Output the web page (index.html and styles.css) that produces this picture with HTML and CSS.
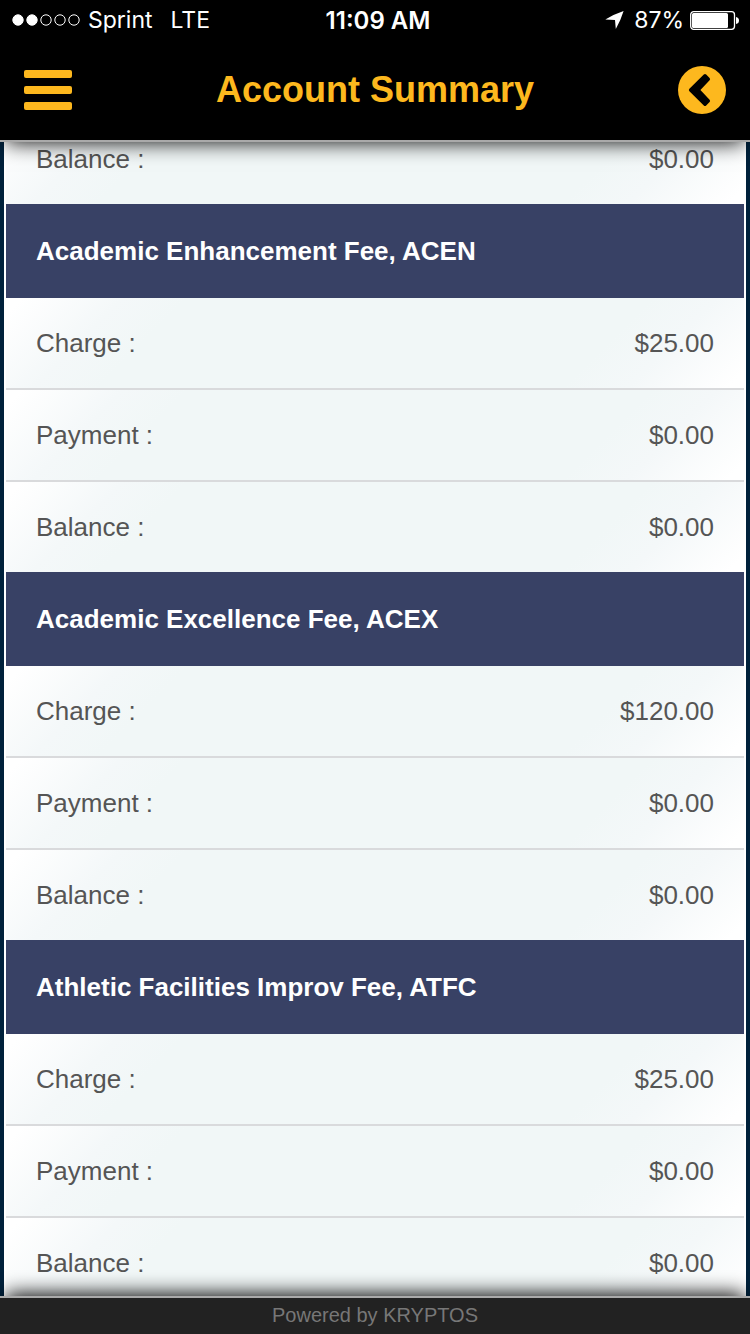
FILE: index.html
```html
<!DOCTYPE html>
<html lang="en">
<head>
    <meta charset="UTF-8">
    <meta name="viewport" content="width=device-width, initial-scale=1.0">
    <title>Account Summary</title>
    <link rel="stylesheet" href="styles.css">
</head>
<body>
    <header class="top">
        <div class="status-bar">
            <div class="carrier">
                <svg width="68" height="12" viewBox="0 0 68 12" fill="none" stroke="#fff" aria-hidden="true">
                    <circle cx="6" cy="6" r="5.2" fill="#fff"/>
                    <circle cx="20" cy="6" r="5.2" fill="#fff"/>
                    <circle cx="34" cy="6" r="5.2"/>
                    <circle cx="48" cy="6" r="5.2"/>
                    <circle cx="62" cy="6" r="5.2"/>
                </svg>
                <span class="operator">Sprint</span>
                <span class="network">LTE</span>
            </div>
            <div class="time">11:09 AM</div>
            <div class="power">
                <svg width="19" height="18" viewBox="0 0 19 18" fill="#fff" aria-hidden="true">
                    <path d="M18.6 0Q8 3.6 0.3 8.4L10 8.9 10.8 17.9Q15.5 10 18.6 0Z"/>
                </svg>
                <span class="percent">87%</span>
                <svg width="49" height="19" viewBox="0 0 49 19" aria-hidden="true">
                    <rect x="0.7" y="0.7" width="43.8" height="17.6" rx="3" fill="none" stroke="#fff" stroke-width="1.3"/>
                    <rect x="2" y="2" width="36" height="15" rx="1.5" fill="#fff"/>
                    <path d="M46 6v7q3-0.5 3-3.5T46 6z" fill="#fff"/>
                </svg>
            </div>
        </div>
        <div class="nav">
            <button class="icon-btn" type="button" aria-label="Menu">
                <svg width="48" height="40" viewBox="0 0 48 40" fill="#fdb81e">
                    <rect width="48" height="8" rx="2"/>
                    <rect y="16" width="48" height="8" rx="2"/>
                    <rect y="32" width="48" height="8" rx="2"/>
                </svg>
            </button>
            <h1>Account Summary</h1>
            <button class="icon-btn" type="button" aria-label="Back">
                <svg width="48" height="48" viewBox="0 0 48 48">
                    <circle cx="24" cy="24" r="24" fill="#fdb81e"/>
                    <path d="M25.8 8.5q1.2-1 2.4 0l3.4 3.4q1 1.2 0 2.4L22.4 24l9.2 9.7q1 1.2 0 2.4l-3.4 3.4q-1.2 1-2.4 0L11.4 25.2q-1.2-1.2 0-2.4z" fill="#000"/>
                </svg>
            </button>
        </div>
    </header>

    <main class="content">
        <div class="fees">
            <dl class="rows">
                <div class="row"><dt>Balance :</dt><dd>$0.00</dd></div>
            </dl>

            <h2>Academic Enhancement Fee, ACEN</h2>
            <dl class="rows">
                <div class="row"><dt>Charge :</dt><dd>$25.00</dd></div>
                <div class="row"><dt>Payment :</dt><dd>$0.00</dd></div>
                <div class="row"><dt>Balance :</dt><dd>$0.00</dd></div>
            </dl>

            <h2>Academic Excellence Fee, ACEX</h2>
            <dl class="rows">
                <div class="row"><dt>Charge :</dt><dd>$120.00</dd></div>
                <div class="row"><dt>Payment :</dt><dd>$0.00</dd></div>
                <div class="row"><dt>Balance :</dt><dd>$0.00</dd></div>
            </dl>

            <h2>Athletic Facilities Improv Fee, ATFC</h2>
            <dl class="rows">
                <div class="row"><dt>Charge :</dt><dd>$25.00</dd></div>
                <div class="row"><dt>Payment :</dt><dd>$0.00</dd></div>
                <div class="row"><dt>Balance :</dt><dd>$0.00</dd></div>
            </dl>
        </div>
    </main>

    <footer class="footer">Powered by KRYPTOS</footer>
</body>
</html>
```
FILE: styles.css
```css
* {
    box-sizing: border-box;
}
body {
    margin: 0;
    height: 100vh;
    display: flex;
    flex-direction: column;
    overflow: hidden;
    background-color: #00213b;
    font-family: "Liberation Sans", Arial, sans-serif;
    font-size: 26px;
    color: #555;
}
h1, h2, dl, dd {
    margin: 0;
}

/* top bar */
.top {
    position: relative;
    z-index: 1;
    flex: none;
    background-color: #000;
    border-bottom: 2px solid #aaa;
    box-shadow: 0 6px 20px -6px #000;
}
.status-bar {
    display: grid;
    grid-template-columns: 1fr auto 1fr;
    align-items: center;
    height: 40px;
    padding: 0 11px 0 12px;
    font-family: Inter, "Liberation Sans", sans-serif;
    font-size: 23px;
    color: #fff;
}
.carrier, .power {
    display: flex;
    align-items: center;
}
.operator {
    margin-left: 8px;
}
.network {
    margin-left: 18px;
}
.time {
    padding-left: 5px;
    font-size: 24px;
    font-weight: 600;
}
.power {
    justify-content: flex-end;
}
.percent {
    margin: 0 6px 0 10px;
}
.nav {
    display: flex;
    align-items: center;
    justify-content: space-between;
    height: 100px;
    padding: 0 24px;
}
h1 {
    font-size: 36px;
    color: #fdb81e;
}
.icon-btn {
    display: flex;
    padding: 0;
    border: none;
    background: none;
    cursor: pointer;
}

/* fee list */
.content {
    flex: 1;
    min-height: 0;
    overflow: hidden;
    margin: 0 4px;
    padding: 0 2px;
    background-color: #fff;
}
.fees {
    /* scrolled part of the list */
    margin-top: -28px;
}
h2 {
    padding: 0 30px;
    font-size: 26px;
    line-height: 94px;
    color: #fff;
    background-color: #384165;
}
.row {
    display: flex;
    justify-content: space-between;
    padding: 0 30px;
    line-height: 90px;
    background: linear-gradient(135deg, #fff 2%, #f4f8f9 14%, #f1f7f7 22%, #f1f7f7 78%, #f4f8f9 86%, #fff 98%);
}
.row + .row {
    border-top: 2px solid #d9dadc;
}

/* footer */
.footer {
    position: relative;
    z-index: 1;
    flex: none;
    padding-bottom: 2px;
    border-top: 2px solid #aaa;
    background-color: #222;
    box-shadow: 0 -8px 20px -6px #000;
    font-size: 20px;
    line-height: 34px;
    text-align: center;
    color: #777;
}
```
